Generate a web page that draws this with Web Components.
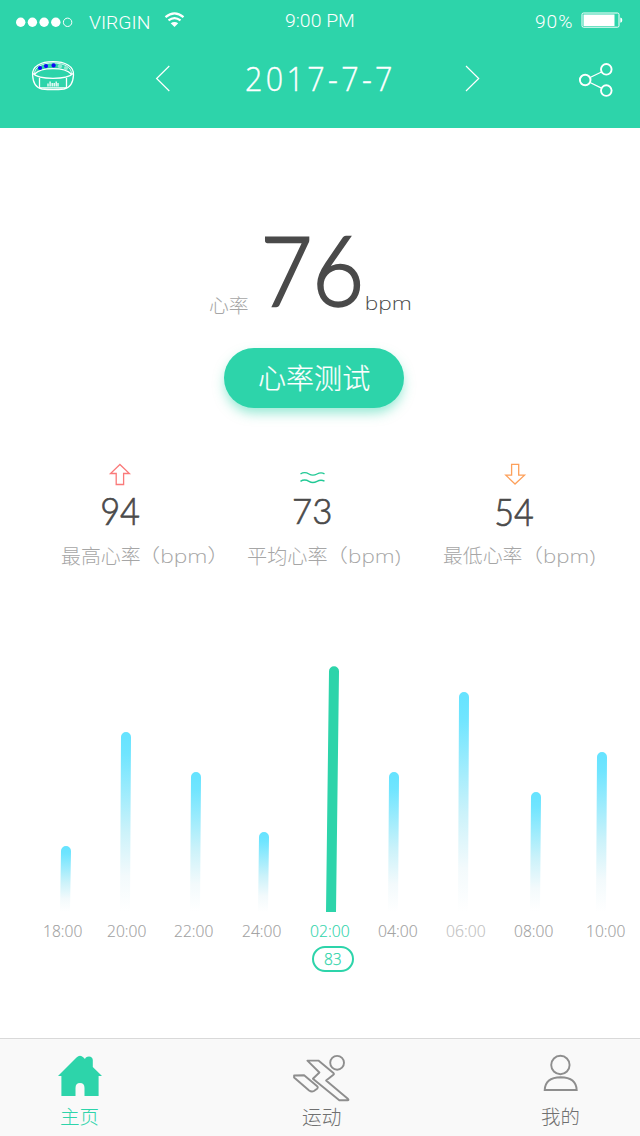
<!DOCTYPE html>
<html lang="zh-CN">
<head>
<meta charset="utf-8">
<title>心率</title>
<style>
html,body{margin:0;background:#fff}
body{width:640px;height:1136px;overflow:hidden;font-family:Lato,"Noto Sans CJK SC",sans-serif}
</style>
</head>
<body>
<heart-app></heart-app>
<script>
const define = (name, html, setup) => customElements.define(name, class extends HTMLElement {
  connectedCallback() {
    if (this.shadowRoot) return;
    const root = this.attachShadow({mode: 'open'});
    const t = document.createElement('template');
    t.innerHTML = html;
    root.append(t.content.cloneNode(true));
    if (setup) setup.call(this, root);
  }
});

// One line of text whose visible glyphs fill a w x h box.
const ctx = document.createElement('canvas').getContext('2d');
define('fit-text', `<style>
:host{display:block;flex:none;font-family:Lato,"Noto Sans CJK SC",sans-serif;font-weight:300}
:host([face=plain]){font-family:"Open Sans","Noto Sans CJK SC",sans-serif}
:host([face=status]){font-family:Roboto,sans-serif}
span{display:block;width:max-content;white-space:nowrap;transform-origin:0 0}
</style><span></span>`, function (root) {
  const s = root.querySelector('span');
  const text = this.getAttribute('text');
  const w = +this.getAttribute('w'), h = +this.getAttribute('h');
  const sp = +(this.getAttribute('tracking') || 0);
  s.textContent = text;
  this.style.width = w + 'px';
  this.style.height = h + 'px';
  const cs = getComputedStyle(this);
  const measure = size => {
    ctx.font = cs.fontWeight + ' ' + size + 'px ' + cs.fontFamily;
    ctx.letterSpacing = sp * size + 'px';
    return ctx.measureText(text);
  };
  const ref = measure(100);
  const size = h * 100 / (ref.actualBoundingBoxAscent + ref.actualBoundingBoxDescent);
  const m = measure(size);
  const k = w / (m.actualBoundingBoxLeft + m.actualBoundingBoxRight);
  const base = h / 2 + (m.fontBoundingBoxAscent - m.fontBoundingBoxDescent) / 2;
  s.style.fontSize = size + 'px';
  s.style.lineHeight = h + 'px';
  s.style.letterSpacing = sp * size + 'px';
  s.style.transform = 'translate(' + m.actualBoundingBoxLeft * k + 'px,' + (m.actualBoundingBoxAscent - base) + 'px) scaleX(' + k + ')';
});

define('status-bar', `<style>
:host{display:flex;align-items:flex-start;height:40px;color:#fff}
svg{display:block;flex:none}
</style>
<svg width="74" height="40" fill="#fff"><circle cx="20.7" cy="22.3" r="4.7"/><circle cx="32.4" cy="22.3" r="4.7"/><circle cx="44.1" cy="22.3" r="4.7"/><circle cx="55.8" cy="22.3" r="4.7"/><circle cx="67.6" cy="22.3" r="4.2" fill="none" stroke="#fff"/></svg>
<fit-text face="status" text="VIRGIN" w="60.5" h="13.4" style="margin:15.7px 0 0 15.3px"></fit-text>
<svg width="22" height="40" style="margin-left:13.2px" fill="none" stroke="#fff" stroke-width="2.2"><path d="M2.5 17.1Q11.5 9.5 20.500 17.100M5.500 20.400Q11.500 15.700 17.500 20.400"/><path d="M7.700 23.300Q11.500 20.500 15.200 23.300L11.500 27z" fill="#fff" stroke="none"/></svg>
<fit-text face="status" text="9:00 PM" w="69.2" h="13.4" style="margin:13.7px 0 0 100.3px"></fit-text>
<fit-text face="status" text="90%" w="36.8" h="13.6" tracking=".05" style="margin:14.8px 0 0 180.8px"></fit-text>
<svg width="44" height="40" style="margin-left:7.700px" fill="none"><rect x="2" y="13" width="37" height="14.200" rx="1.500" stroke="#fff"/><rect x="3.500" y="14.500" width="31" height="11.500" fill="#fff"/><path d="M40.300 17.500q2 0 2 2.600t-2 2.600z" fill="#fff"/></svg>`);

define('date-nav', `<style>
:host{display:flex;align-items:flex-start;height:88px;color:#fff}
svg{display:block;flex:none}
</style>
<svg width="80" height="60" viewBox="0 40 80 60" fill="none" stroke="#fff" stroke-width="1.300">
<path d="M32.600 75C32 66 41 61.700 53 61.700S74 66 73.500 75C73 84 70 88 64 89 57 89.700 49 89.700 42 89 36 88 33 83 32.600 75z"/>
<path d="M34.500 74.500C34 66.500 43 63 53 63S72 66.500 71.500 74.500" stroke-width=".8"/>
<path d="M34.700 74C41 66.800 65 66.800 71.200 74M33 73.500C39 80 67 80 73 73.500"/><path d="M39.500 78v9q0 .8 1 .8h25q1 0 1-.8V78"/>
<path d="M48 86.500v-3M50.100 86.500v-5M52.200 86.500V83M54.200 86.500V83M56.200 86.500v-5M58 86.500v-3.500" stroke-width="1.300"/>
<g stroke="none"><g fill="#1207f5"><circle cx="40" cy="68" r="2.100"/><circle cx="46" cy="66.100" r="2.100"/><circle cx="53.600" cy="65.400" r="2.100"/></g><g fill="#91e9d0"><circle cx="60" cy="66.200" r="2.100"/><circle cx="66" cy="68.100" r="2.100"/></g></g></svg>
<svg width="100" height="60" viewBox="80 40 100 60" fill="none" stroke="#fff" stroke-width="1.200"><path d="M169.300 66 156.600 78.500 169.300 91"/></svg>
<fit-text face="plain" text="2017-7-7" w="145" h="24" tracking=".11" style="-webkit-text-stroke:.35px;margin:26.500px 0 0 66px"></fit-text>
<svg width="100" height="60" viewBox="391 40 100 60" fill="none" stroke="#fff" stroke-width="1.200"><path d="M466 66 478.700 78.500 466 91"/></svg>
<svg width="149" height="60" viewBox="491 40 149 60" fill="none" stroke="#fff" stroke-width="1.900"><circle cx="585.200" cy="80" r="5.300"/><circle cx="606.300" cy="69.300" r="5.300"/><circle cx="606.300" cy="90.600" r="5.300"/><path d="m590 77.500 11.500-5.500M590 82.500l11.500 5.700" stroke-width="1.300"/></svg>`);

define('rate-hero', `<style>
:host{display:block;height:334px;color:#4a4a4a}
.row{display:flex;align-items:flex-start;padding:108px 0 0 209.300px;height:112px}
.btn{display:flex;justify-content:center;align-items:flex-start;box-sizing:border-box;width:180px;height:60px;padding:16px 0 0 1px;border:0;border-radius:30px;margin-left:224px;background:#2dd4aa;color:#fff;box-shadow:0 6px 12px -1px rgba(45,212,170,.5)}
</style>
<div class="row"><fit-text text="心率" w="39" h="18.300" style="color:#a6a6a6;margin-top:60.500px"></fit-text>
<fit-text text="76" w="93.500" h="70.500" style="-webkit-text-stroke:2.400px #4a4a4a;margin:1px 0 0 17.700px"></fit-text>
<fit-text face="plain" text="bpm" w="44" h="18.500" style="margin:61.200px 0 0 6.500px"></fit-text></div>
<button class="btn"><fit-text text="心率测试" w="110.500" h="27" style="-webkit-text-stroke:.2px"></fit-text></button>`);

define('rate-stat', `<style>
:host{display:flex;flex-direction:column;align-items:flex-start}
slot{display:block;height:37.300px}
.label{display:flex;color:#a6a6a6;margin-top:19.700px}
</style><slot></slot>`, function (root) {
  const a = n => this.getAttribute(n);
  const add = (parent, text, w, h, css, face) => {
    const e = document.createElement('fit-text');
    e.setAttribute('text', text); e.setAttribute('w', w); e.setAttribute('h', h);
    if (face) e.setAttribute('face', face);
    e.style.cssText = css; parent.append(e);
  };
  add(root, a('value'), a('vw'), 26.8, '-webkit-text-stroke:.7px;color:#4a4a4a;margin-left:' + a('vx') + 'px');
  const label = document.createElement('div');
  label.className = 'label';
  root.append(label);
  add(label, a('label'), 78.5, 18.7, '');
  add(label, a('unit'), a('uw'), 20.5, 'margin-left:' + a('ux') + 'px', 'plain');
});

define('rate-stats', `<style>
:host{display:grid;grid-template-columns:187.700px 194.300px 1fr;height:204px;padding-left:60.800px;box-sizing:border-box}
svg{display:block}
</style>
<rate-stat value="94" vw="37.500" vx="40.900" label="最高心率" unit="（bpm）" ux="14" uw="61.500"><svg width="100" height="37" viewBox="60.800 462 100 37" fill="none" stroke="#fa7a7a" stroke-width="1.300"><path d="M119.700 464.500 110.300 473.500H116V484.500H123.400V473.500H129.200z"/></svg></rate-stat>
<rate-stat value="73" vw="36.500" vx="45.900" label="平均心率" unit="（bpm)" ux="14.300" uw="59.500"><svg width="100" height="37" viewBox="248 462 100 37" fill="none" stroke="#21c995" stroke-width="1.400"><path d="M300.500 474c3-2 6-1.500 8.500 0s5 1.600 8 0 5-1.500 7.500-.2M300.500 481.300c3-2 6-1.500 8.500 0s5 1.600 8 0 5-1.500 7.500-.2"/></svg></rate-stat>
<rate-stat value="54" vw="37.500" vx="52.900" label="最低心率" unit="（bpm)" ux="14.300" uw="59"><svg width="100" height="37" viewBox="442.800 462 100 37" fill="none" stroke="#fda05a" stroke-width="1.300"><path d="M514.800 484 505.600 475.200H511.400V464.400H518.500V475.200H524.300z"/></svg></rate-stat>`);

define('rate-chart', `<style>
:host{display:block;height:372px;color:#aaa}
svg{display:block}
.times{display:flex;padding:13.500px 0 0 43.800px;height:20.500px}
.pill{display:flex;justify-content:center;align-items:flex-start;box-sizing:border-box;width:42px;height:26px;border:2px solid #2dd4aa;border-radius:13px;padding-top:6px;margin-left:312px;color:#2dd4aa}
</style>
<svg width="640" height="246" viewBox="0 666 640 246"><defs><linearGradient id="fade" x1="0" y1="0" x2="0" y2="1"><stop offset="0" stop-color="#65e3ff"/><stop offset=".12" stop-color="#70e5ff"/><stop offset=".55" stop-color="#cbf2fa"/><stop offset=".8" stop-color="#f3fafc"/><stop offset="1" stop-color="#fff"/></linearGradient></defs><g id="bars"></g></svg>
<div class="times"></div>
<div class="pill"><fit-text face="plain" text="83" w="17.300" h="12.300" style="-webkit-text-stroke:.25px"></fit-text></div>`, function (root) {
  const bars = [[66,846],[126,732],[196,772],[264,832],[334,666.3],[394,772],[464,692],[536,792],[602,752]];
  root.querySelector('#bars').innerHTML = bars.map(([x, y], i) => {
    const d = i === 4 ? 3 : 1;
    return `<path fill="${i === 4 ? '#2dd4aa' : 'url(#fade)'}" d="M${x-5} ${y+5}a5 5 0 0 1 10 0L${x+5-d} 912h-10z"/>`;
  }).join('');
  const times = [['18:00',44.2,37.8],['20:00',107.1,38.7],['22:00',174.5,38.7],['24:00',242.5,38.7],['02:00',310.2,39],['04:00',378.2,39],['06:00',446.2,39],['08:00',514.1,38.7],['10:00',587.3,37.7]];
  let x = 43.8;
  root.querySelector('.times').innerHTML = times.map(([t, l, w], i) => {
    const c = i === 4 ? '#2dd4aa' : i === 6 ? '#c0c0c0' : '#a0a0a0';
    const s = `<fit-text face="plain" text="${t}" w="${w}" h="12.500" style="-webkit-text-stroke:.15px;margin-left:${l-x}px;color:${c}"></fit-text>`;
    x = l + w;
    return s;
  }).join('');
});

define('tab-item', `<style>
:host{display:flex;flex-direction:column;align-items:center}
slot{display:block;height:68px}
</style><slot></slot>`, function (root) {
  const e = document.createElement('fit-text');
  e.setAttribute('text', this.getAttribute('label'));
  e.setAttribute('w', this.getAttribute('w')); e.setAttribute('h', 18.5);
  root.append(e);
});

define('tab-bar', `<style>
:host{display:grid;grid-template-columns:160px 323px 154px;height:98px;box-sizing:border-box;border-top:1px solid #d9d9d9;background:#f9f9f9;color:#707070}
svg{display:block}
</style>
<tab-item label="主页" w="37.300" style="color:#2dd4aa"><svg width="60" height="69" viewBox="50 1039 60 69" fill="#2dd4aa"><path d="M58 1076 76.500 1057.500Q80 1054 83.500 1057.500L85 1059Q85.500 1056.500 89 1056.500T92.800 1060V1067L102 1076H98.600V1096H84.500V1088Q84.500 1083 80 1083T75.500 1088V1096H61.400V1076z"/></svg></tab-item>
<tab-item label="运动" w="39"><svg width="60" height="69" viewBox="291.900 1039 60 69" fill="none" stroke="#8e8e8e" stroke-width="1.900"><circle cx="337" cy="1062.800" r="6.900"/><path d="M307.300 1060.600H318.300L333.300 1073Q334.500 1074 333 1075L326 1080.500 348 1099Q349 1100.200 347.500 1100.200H339.200L312.800 1078.800 319.300 1072.500zM294 1075.500 304 1075.300 316.800 1086Q318.500 1087.500 317 1088.700L313.800 1091Q311.500 1092.200 309 1090.500L294 1077.500z" stroke-linejoin="round"/></svg></tab-item>
<tab-item label="我的" w="38"><svg width="60" height="69" viewBox="530.300 1039 60 69" fill="none" stroke="#8e8e8e" stroke-width="1.900"><circle cx="560.700" cy="1065" r="9.200"/><path d="M545 1090Q545.500 1077.500 561 1077.200 576.500 1077.500 577 1090z"/></svg></tab-item>`);

define('heart-app', `<style>
:host{display:block;width:640px;height:1136px;overflow:hidden;background:#fff}
header{background:#2dd4aa;height:128px}
</style>
<header><status-bar></status-bar><date-nav></date-nav></header>
<main><rate-hero></rate-hero><rate-stats></rate-stats><rate-chart></rate-chart></main>
<tab-bar></tab-bar>`);
</script>
</body>
</html>
